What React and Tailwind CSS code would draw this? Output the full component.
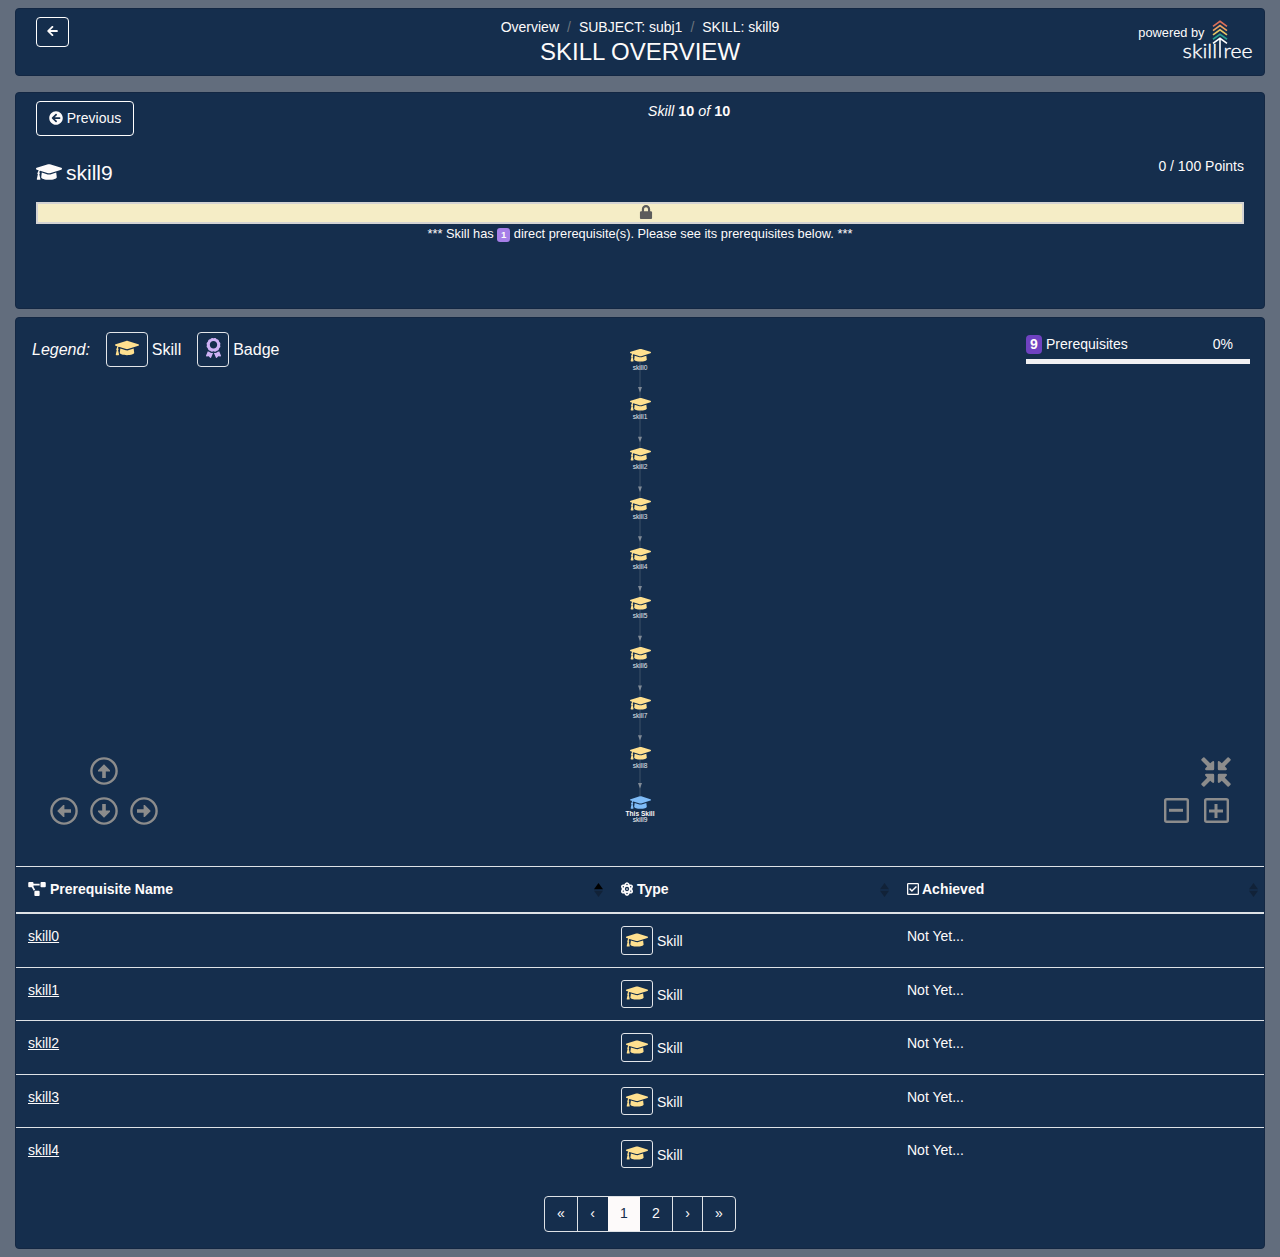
import React from "react";
import {
  FaArrowLeft,
  FaArrowCircleLeft,
  FaGraduationCap,
  FaLock,
  FaAward,
  FaProjectDiagram,
  FaAtom,
  FaRegCheckSquare,
} from "react-icons/fa";

const PANEL = "rounded border border-[#132743] bg-[#152e4d]";
const NODES = [0, 1, 2, 3, 4, 5, 6, 7, 8, 9];
const ROWS = ["skill0", "skill1", "skill2", "skill3", "skill4"];

function Logo() {
  return (
    <svg className="absolute left-[1166px] top-[9px] h-[50px] w-[80px]" viewBox="0 0 80 50" fill="none">
      <path d="M31 8.4 38 3.4 45 8.4" stroke="#dd7059" strokeWidth="1.7" />
      <path d="M31 12.6 38 7.6 45 12.6" stroke="#eda260" strokeWidth="1.7" />
      <path d="M31 16.9 38 11.9 45 16.9" stroke="#e6c565" strokeWidth="1.7" />
      <path d="M31 21.2 38 16.2 45 21.2" stroke="#2a9d8f" strokeWidth="1.7" />
      <path d="M31 25.3 38 20.3 45 25.3M38 20.5V39.8" stroke="#fff" strokeWidth="1.6" />
      <g fontFamily="Lato, sans-serif" fontWeight="300" fontSize="19" fill="#fff" stroke="#fff" strokeWidth="0.35">
        <text x="0.6" y="39.8" textLength="34.5" lengthAdjust="spacingAndGlyphs">skill</text>
        <text x="41.5" y="39.8" textLength="29" lengthAdjust="spacingAndGlyphs">ree</text>
      </g>
    </svg>
  );
}

function CircleArrow({ className, turn }) {
  return (
    <svg className={"absolute h-7 w-7 " + className} viewBox="0 0 28 28" fill="none">
      <circle cx="14" cy="14" r="12.6" stroke="#8c8c8c" strokeWidth="2.4" />
      <path
        transform={`rotate(${turn} 14 14)`}
        d="M14 7.2 20 13.2V14.4H15.8V21H12.2V14.4H8V13.2Z"
        fill="#8c8c8c"
      />
    </svg>
  );
}

function SquareSign({ className, plus }) {
  return (
    <svg className={"absolute h-[25px] w-[25px] " + className} viewBox="0 0 25 25" fill="none" stroke="#8c8c8c">
      <rect x="1.2" y="1.2" width="22.6" height="22.6" rx="1.5" strokeWidth="2.4" />
      <path d={plus ? "M5 13H19M12 6V20" : "M5 12.3H19"} strokeWidth="3" />
    </svg>
  );
}

function Fit() {
  return (
    <svg className="absolute left-[1185px] top-[439px] h-[30px] w-[30px]" viewBox="0 0 30 30" fill="#8c8c8c">
      {[0, 90, 180, 270].map((a) => (
        <path
          key={a}
          transform={`rotate(${a} 15 15)`}
          d="M0.4 2.2 2.2 0.4Q2.9 0 3.5 0.5L9.2 6.2 11.2 4.4Q13.2 3.4 13.2 5.2V12Q13.2 13.2 12 13.2H5.2Q3.4 13.2 4.4 11.2L6.2 9.2 0.5 3.5Q0 2.9 0.4 2.2Z"
        />
      ))}
    </svg>
  );
}

function Sort({ active }) {
  return (
    <svg className="h-[14px] w-[9px]" viewBox="0 0 9 14">
      <path d="M0 6.2 4.5 0 9 6.2Z" fill={active ? "#000" : "#112238"} />
      <path d="M0 7.8 4.5 14 9 7.8Z" fill="#112238" />
    </svg>
  );
}

function Node({ i }) {
  const last = i === 9;
  return (
    <div className="absolute left-[594px] w-[60px] text-center text-[6.6px] leading-[7px]" style={{ top: 28.6 + i * 49.75 }}>
      <FaGraduationCap
        className={
          last
            ? "mx-auto h-[17px] w-[21px] text-[#7fbcf8]"
            : "mx-auto h-[17px] w-[21px] -translate-y-[0.3px] text-[#ffe08f]"
        }
      />
      {last ? (
        <div className="leading-[6px]">
          <b>This Skill</b>
          <br />
          skill9
        </div>
      ) : (
        <div className="text-[#e3e7ec]">skill{i}</div>
      )}
    </div>
  );
}

function Head({ icon, label, active }) {
  return (
    <div className="flex items-center pl-3 pr-[6px] font-bold">
      {icon}
      <span className="flex-1">{label}</span>
      <Sort active={active} />
    </div>
  );
}

export default function App() {
  return (
    <div className="h-[1257px] bg-[#626d7d] px-[15px] pt-2 font-['Liberation_Sans',Arial,sans-serif] text-[14px] leading-[21px] text-[#fdfbfb]">
      <header className={"relative h-[68px] pt-2 text-center " + PANEL}>
        <button className="absolute left-5 top-2 flex h-[30px] w-[33px] items-center justify-center rounded border border-white">
          <FaArrowLeft className="h-3 w-[11px] -translate-y-px" />
        </button>
        <nav className="flex justify-center gap-2">
          <span>Overview</span>
          <span className="text-[#6c757d]">/</span>
          <span>SUBJECT: subj1</span>
          <span className="text-[#6c757d]">/</span>
          <span>SKILL: skill9</span>
        </nav>
        <h1 className="text-[24px] leading-7">SKILL OVERVIEW</h1>
        <span className="absolute right-[59.5px] top-[13px] text-[12.8px]">powered by</span>
        <Logo />
      </header>

      <section className={"mt-4 h-[217px] px-5 pt-2 " + PANEL}>
        <div className="flex items-start">
          <button className="flex h-[35px] w-[98px] items-center justify-center gap-1 rounded border border-white">
            <FaArrowCircleLeft className="h-[14px] w-[14px] -translate-y-px" />
            Previous
          </button>
          <div className="flex-1 text-center text-[14.4px]">
            <i>Skill</i> <b>10</b> <i>of</i> <b>10</b>
          </div>
        </div>
        <div className="mt-5 flex items-start">
          <h2 className="mt-1 flex flex-1 items-center gap-1 text-[21px] leading-[25px]">
            <FaGraduationCap className="h-[21px] w-[26px] -translate-y-[0.5px]" />
            skill9
          </h2>
          <span>0 / 100 Points</span>
        </div>
        <div className="mt-[17px] flex h-[22px] items-center justify-center border-2 border-[#d3d3d3] bg-[#f5edc6] pl-3">
          <FaLock className="h-[14px] w-[13px] -translate-x-[0.5px] -translate-y-px text-[#5c5c5c]" />
        </div>
        <p className="flex items-center justify-center whitespace-pre text-[12.8px] leading-5">
          {"*** Skill has "}
          <span className="mt-px h-[14px] w-[13px] rounded-[3px] bg-[#a67fe8] text-center text-[9.6px] font-bold leading-[14px]">1</span>
          {" direct prerequisite(s). Please see its prerequisites below. ***"}
        </p>
      </section>

      <section className={"relative mt-2 h-[932px] " + PANEL}>
        <div className="flex h-[548px] items-start justify-between pl-4 pr-[14px] pt-[14px]">
          <div className="flex items-center text-[16px]">
            <i className="mr-4">Legend:</i>
            <span className="mr-1 flex h-[35px] w-[42px] items-center justify-center rounded border border-[#e3e6ea]">
              <FaGraduationCap className="h-5 w-6 -translate-y-[2px] text-[#ffe08f]" />
            </span>
            Skill
            <span className="ml-4 mr-1 flex h-[35px] w-8 items-center justify-center rounded border border-[#e3e6ea]">
              <FaAward className="h-5 w-[15px] -translate-y-[2px] text-[#cfb2f5]" />
            </span>
            Badge
          </div>
          <div className="w-[224px] pt-[2px]">
            <div className="flex items-center pr-[17px]">
              <b className="mr-1 flex h-[19px] w-4 items-center justify-center rounded bg-[#6f42c1]">9</b>
              <span className="flex-1">Prerequisites</span>
              <span>0%</span>
            </div>
            <div className="mt-1 h-[5px] bg-[#f0f0f2]" />
          </div>
        </div>

        <svg className="absolute left-[620px] top-[28px] h-[460px] w-2" viewBox="0 0 8 460">
          <path d="M4 10V450" stroke="#3d5069" strokeWidth="1" />
          {NODES.slice(1).map((i) => (
            <path key={i} transform={`translate(0 ${(i - 1) * 49.75 - (i === 9 ? 2 : 0)})`} d="M2 41H6L4 46.5Z" fill="#808a96" />
          ))}
        </svg>
        {NODES.map((i) => <Node key={i} i={i} />)}

        <CircleArrow className="left-[74px] top-[438.6px]" turn={0} />
        <CircleArrow className="left-[34px] top-[478.6px]" turn={270} />
        <CircleArrow className="left-[74px] top-[478.6px]" turn={180} />
        <CircleArrow className="left-[114px] top-[478.6px]" turn={90} />
        <Fit />
        <SquareSign className="left-[1148px] top-[480px]" />
        <SquareSign className="left-[1188px] top-[480px]" plus />

        <div className="grid h-[48px] grid-cols-[593px_286px_369px] border-b-2 border-t border-[#dee2e6]">
          <Head active icon={<FaProjectDiagram className="mr-1 h-[14px] w-[18px] -translate-y-px" />} label="Prerequisite Name" />
          <Head icon={<FaAtom className="mr-1 h-[14px] w-3 -translate-y-px" />} label="Type" />
          <Head icon={<FaRegCheckSquare className="mr-[3px] h-[14px] w-3 -translate-y-px" />} label="Achieved" />
        </div>
        {ROWS.map((name, i) => (
          <div
            key={name}
            className={
              "grid grid-cols-[593px_286px_369px] pt-3 " +
              (i === 0 ? "h-[53px]" : i % 2 ? "h-[53px] border-t border-[#dee2e6]" : "h-[54px] border-t border-[#dee2e6]")
            }
          >
            <a className="pl-3 underline">{name}</a>
            <div className="flex h-[29px] items-start pl-3">
              <span
                className={
                  "mr-1 flex w-8 items-center justify-center rounded-[3px] border border-[#e3e6ea] " +
                  (i === 0 || i === 2 ? "h-[29px]" : "h-[28px]")
                }
              >
                <FaGraduationCap className="h-[18px] w-[22px] -translate-y-px text-[#ffe08f]" />
              </span>
              <span className="pt-[5px]">Skill</span>
            </div>
            <span className="pl-3">Not Yet...</span>
          </div>
        ))}
        <div className="mt-[15px] flex justify-center">
          <div className="flex h-9 w-[192px] rounded border border-[#dee2e6] leading-[33px]">
            <span className="w-[33px] border-r border-[#dee2e6] text-center">«</span>
            <span className="w-[30px] pr-px text-center">‹</span>
            <span className="w-8 bg-[#fdfafa] text-center text-[#152e4d]">1</span>
            <span className="w-[33px] border-r border-[#dee2e6] text-center">2</span>
            <span className="w-[30px] border-r border-[#dee2e6] text-center">›</span>
            <span className="flex-1 text-center">»</span>
          </div>
        </div>
      </section>
    </div>
  );
}
